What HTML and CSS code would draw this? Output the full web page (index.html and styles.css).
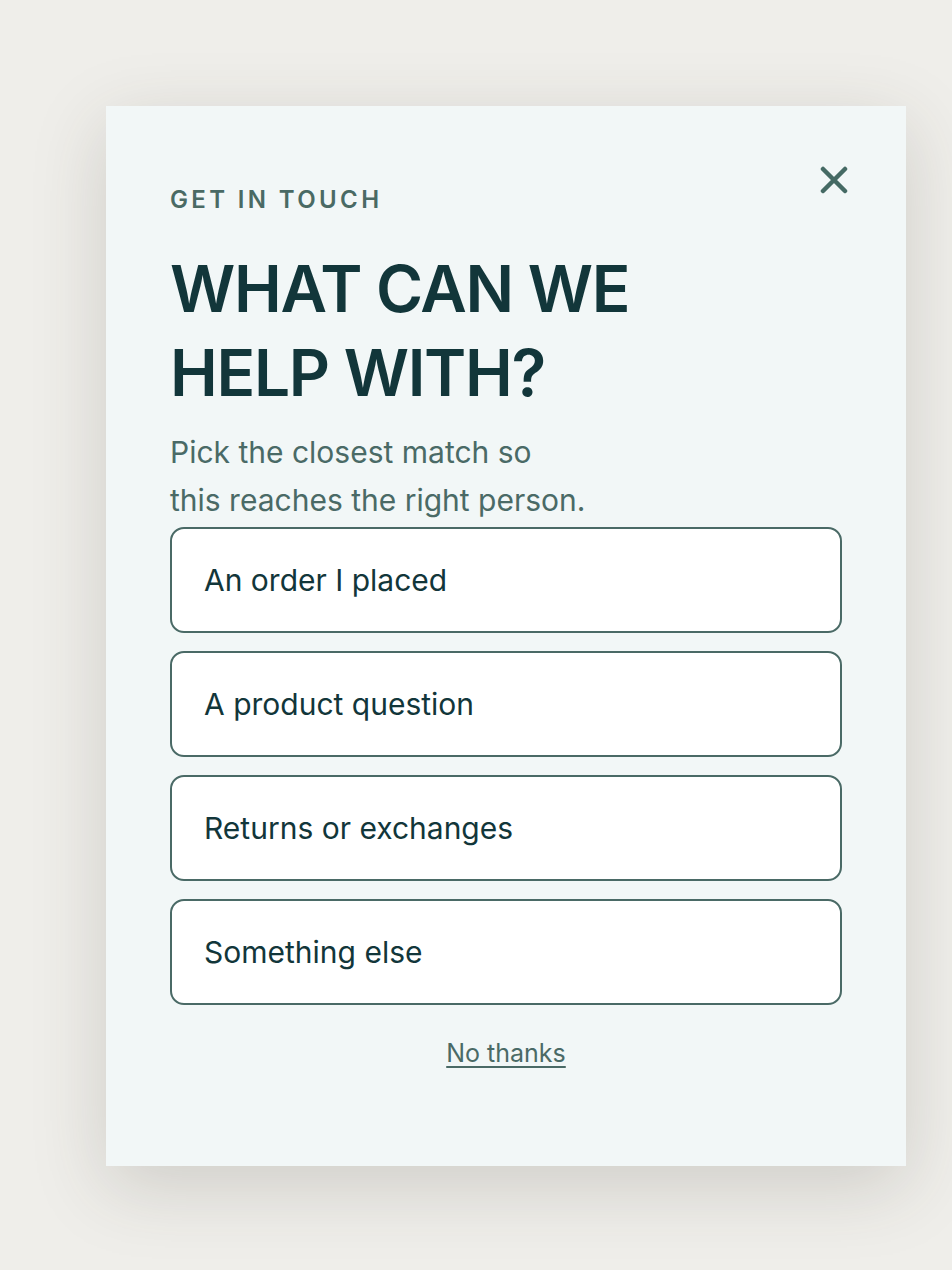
FILE: index.html
```html
<!DOCTYPE html>
<html lang="en">
<head>
<meta charset="utf-8">
<title>Get in touch</title>
<link rel="stylesheet" href="styles.css">
</head>
<body>
<div class="stage">
  <section class="modal" role="dialog" aria-labelledby="title">
    <button class="close" aria-label="Close">
      <svg viewBox="0 0 28 28" width="28" height="28"><path d="M3 3 L25 25 M25 3 L3 25" stroke="currentColor" stroke-width="4.5" stroke-linecap="round" fill="none"/></svg>
    </button>
    <p class="eyebrow">GET IN TOUCH</p>
    <h1 id="title" class="title">WHAT CAN WE<br>HELP WITH?</h1>
    <p class="lede">Pick the closest match so<br>this reaches the right person.</p>
    <div class="options">
      <button class="option">An order I placed</button>
      <button class="option">A product question</button>
      <button class="option">Returns or exchanges</button>
      <button class="option">Something else</button>
    </div>
    <div class="footer"><a class="skip" href="#">No thanks</a></div>
  </section>
</div>
</body>
</html>
```
FILE: styles.css
```css
html, body {
  margin: 0;
  padding: 0;
}
body {
  background: #efeeea;
  font-family: Inter, "Noto Sans", sans-serif;
  width: 952px;
  height: 1270px;
  overflow: hidden;
}
.stage {
  padding: 106px 0 0 106px;
}
.modal {
  position: relative;
  box-sizing: border-box;
  width: 800px;
  height: 1060px;
  background: #f2f7f7;
  padding: 79px 64px 0 64px;
  box-shadow: 0 20px 70px rgba(60, 55, 45, 0.18);
}
.close {
  position: absolute;
  top: 50px;
  right: 48px;
  width: 48px;
  height: 48px;
  border: 0;
  background: transparent;
  color: #456a64;
  padding: 0;
  display: flex;
  align-items: center;
  justify-content: center;
  cursor: pointer;
}
.eyebrow {
  margin: 0;
  font-size: 24px;
  line-height: 30px;
  font-weight: 600;
  letter-spacing: 0.14em;
  color: #4a6a64;
}
.title {
  margin: 32px 0 0;
  font-size: 64px;
  line-height: 84px;
  font-weight: 600;
  color: #12363a;
  letter-spacing: -0.02em;
}
.lede {
  margin: 13px 0 0;
  font-size: 30px;
  line-height: 48px;
  color: #4a6a66;
}
.options {
  display: flex;
  flex-direction: column;
  gap: 18px;
  margin-top: 3px;
}
.option {
  box-sizing: border-box;
  height: 106px;
  width: 100%;
  text-align: left;
  background: #ffffff;
  border: 2px solid #4a6a66;
  border-radius: 14px;
  padding: 0 32px;
  font-family: inherit;
  font-size: 30px;
  color: #12363a;
  cursor: pointer;
}
.footer {
  margin-top: 33px;
  text-align: center;
}
.skip {
  font-size: 25px;
  color: #4a6a66;
  text-decoration: underline;
  text-underline-offset: 4px;
  text-decoration-thickness: 2px;
}
```
